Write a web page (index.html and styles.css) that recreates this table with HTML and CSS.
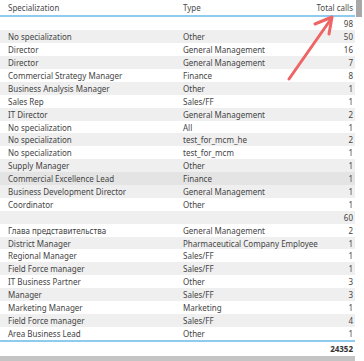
FILE: index.html
```html
<!DOCTYPE html>
<html>
<head>
<meta charset="utf-8">
<link rel="stylesheet" href="styles.css">
</head>
<body>
<div class="visual">
  <div class="table">
    <div class="row head">
      <span class="c1">Specialization</span><span class="c2">Type</span><span class="c3">Total calls</span>
    </div>
    <div class="body">
      <div class="row"><span class="c1"></span><span class="c2"></span><span class="c3">98</span></div>
      <div class="row alt"><span class="c1">No specialization</span><span class="c2">Other</span><span class="c3">50</span></div>
      <div class="row"><span class="c1">Director</span><span class="c2">General Management</span><span class="c3">16</span></div>
      <div class="row alt"><span class="c1">Director</span><span class="c2">General Management</span><span class="c3">7</span></div>
      <div class="row"><span class="c1">Commercial Strategy Manager</span><span class="c2">Finance</span><span class="c3">8</span></div>
      <div class="row alt"><span class="c1">Business Analysis Manager</span><span class="c2">Other</span><span class="c3">1</span></div>
      <div class="row"><span class="c1">Sales Rep</span><span class="c2">Sales/FF</span><span class="c3">1</span></div>
      <div class="row alt"><span class="c1">IT Director</span><span class="c2">General Management</span><span class="c3">2</span></div>
      <div class="row"><span class="c1">No specialization</span><span class="c2">All</span><span class="c3">1</span></div>
      <div class="row alt"><span class="c1">No specialization</span><span class="c2">test_for_mcm_he</span><span class="c3">2</span></div>
      <div class="row"><span class="c1">No specialization</span><span class="c2">test_for_mcm</span><span class="c3">1</span></div>
      <div class="row alt"><span class="c1">Supply Manager</span><span class="c2">Other</span><span class="c3">1</span></div>
      <div class="row hover"><span class="c1">Commercial Excellence Lead</span><span class="c2">Finance</span><span class="c3">1</span></div>
      <div class="row alt"><span class="c1">Business Development Director</span><span class="c2">General Management</span><span class="c3">1</span></div>
      <div class="row"><span class="c1">Coordinator</span><span class="c2">Other</span><span class="c3">1</span></div>
      <div class="row alt"><span class="c1"></span><span class="c2"></span><span class="c3">60</span></div>
      <div class="row"><span class="c1">Глава представительства</span><span class="c2">General Management</span><span class="c3">2</span></div>
      <div class="row alt"><span class="c1">District Manager</span><span class="c2">Pharmaceutical Company Employee</span><span class="c3">1</span></div>
      <div class="row"><span class="c1">Regional Manager</span><span class="c2">Sales/FF</span><span class="c3">1</span></div>
      <div class="row alt"><span class="c1">Field Force manager</span><span class="c2">Sales/FF</span><span class="c3">1</span></div>
      <div class="row"><span class="c1">IT Business Partner</span><span class="c2">Other</span><span class="c3">3</span></div>
      <div class="row alt"><span class="c1">Manager</span><span class="c2">Sales/FF</span><span class="c3">3</span></div>
      <div class="row"><span class="c1">Marketing Manager</span><span class="c2">Marketing</span><span class="c3">1</span></div>
      <div class="row alt"><span class="c1">Field Force manager</span><span class="c2">Sales/FF</span><span class="c3">4</span></div>
      <div class="row"><span class="c1">Area Business Lead</span><span class="c2">Other</span><span class="c3">1</span></div>
      <div class="row alt peek"></div>
    </div>
    <div class="row total"><span class="c1"></span><span class="c2"></span><span class="c3">24352</span></div>
    <div class="hscroll"></div>
  </div>
  <div class="vscroll"><div class="thumb"></div></div>
  <svg class="arrow" width="364" height="361" viewBox="0 0 364 361">
    <path d="M289 79 L331 19" stroke="#ef6464" stroke-width="3" stroke-linecap="round" fill="none"/>
    <path d="M315 24 L332 17 L329 34" stroke="#ef6464" stroke-width="3" stroke-linecap="round" stroke-linejoin="round" fill="none"/>
  </svg>
</div>
</body>
</html>
```
FILE: styles.css
```css
html, body {
  margin: 0;
  padding: 0;
  background: #ffffff;
}
.visual {
  position: relative;
  width: 364px;
  height: 361px;
  display: flex;
  overflow: hidden;
  font-family: "Noto Sans", "Open Sans", sans-serif;
  font-size: 8px;
  color: #444444;
}
.table {
  width: 356px;
  display: flex;
  flex-direction: column;
}
.row {
  display: grid;
  grid-template-columns: 175px minmax(0, 1fr) 40px;
  height: 12.9px;
  align-items: center;
  padding-left: 8px;
  padding-right: 2px;
  white-space: nowrap;
}
.row .c3 { text-align: right; }
.row.head {
  height: 15px;
  border-bottom: 2px solid #8fcbee;
  color: #4a4a4a;
  grid-template-columns: 175px minmax(0, 1fr) 60px;
}
.body {
  height: 326px;
  padding-top: 0.5px;
  box-sizing: border-box;
  overflow: hidden;
  border-bottom: 2px solid #8fcbee;
}
.row.alt { background: #efefef; }
.row.hover { background: #e4e4e4; }
.row.total {
  height: 13px;
  font-weight: 700;
  color: #333;
}
.hscroll {
  height: 5px;
  margin-top: 1px;
  background: #c4c4c4;
}
.vscroll {
  width: 8px;
  display: flex;
  flex-direction: column;
  padding-left: 1px;
}
.thumb {
  width: 6px;
  height: 17px;
  background: #a8a8a8;
}
.arrow {
  position: absolute;
  left: 0;
  top: 0;
  pointer-events: none;
}
```
